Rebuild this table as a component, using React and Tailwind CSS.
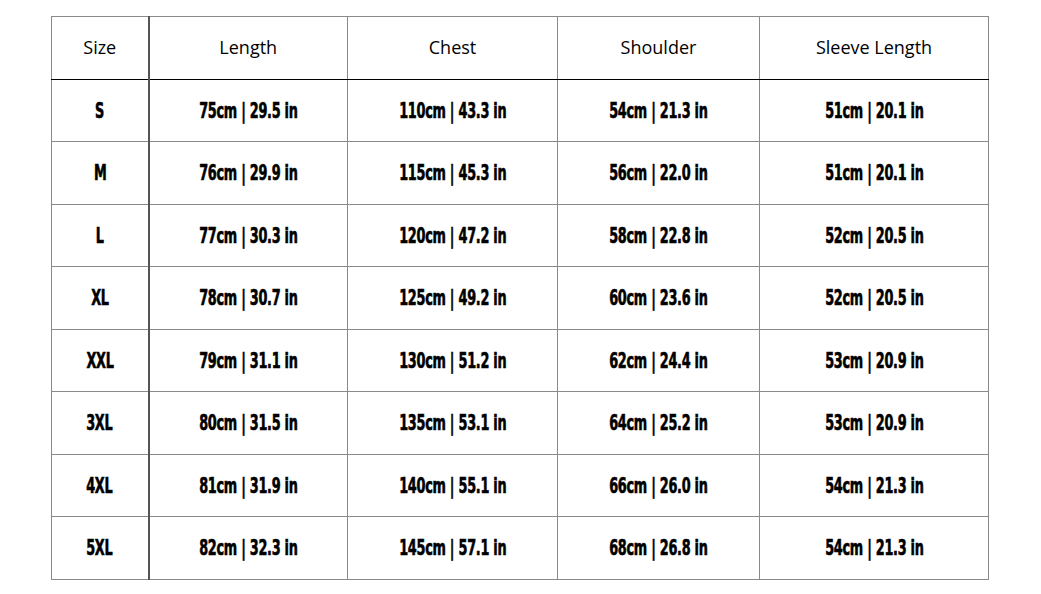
const rows = [
  ['S', '75cm | 29.5 in', '110cm | 43.3 in', '54cm | 21.3 in', '51cm | 20.1 in'],
  ['M', '76cm | 29.9 in', '115cm | 45.3 in', '56cm | 22.0 in', '51cm | 20.1 in'],
  ['L', '77cm | 30.3 in', '120cm | 47.2 in', '58cm | 22.8 in', '52cm | 20.5 in'],
  ['XL', '78cm | 30.7 in', '125cm | 49.2 in', '60cm | 23.6 in', '52cm | 20.5 in'],
  ['XXL', '79cm | 31.1 in', '130cm | 51.2 in', '62cm | 24.4 in', '53cm | 20.9 in'],
  ['3XL', '80cm | 31.5 in', '135cm | 53.1 in', '64cm | 25.2 in', '53cm | 20.9 in'],
  ['4XL', '81cm | 31.9 in', '140cm | 55.1 in', '66cm | 26.0 in', '54cm | 21.3 in'],
  ['5XL', '82cm | 32.3 in', '145cm | 57.1 in', '68cm | 26.8 in', '54cm | 21.3 in'],
]

const headers = ['Size', 'Length', 'Chest', 'Shoulder', 'Sleeve Length']
const widths = ['w-[97px]', 'w-[199px]', 'w-[210px]', 'w-[202px]', 'w-[229px]']

export default function App() {
  return (
    <div className="bg-white w-[1041px] h-[594px] pt-[16px] pl-[51px]">
      <table className="border-collapse table-fixed w-[938px] border border-[#8a8a8a]">
        <thead>
          <tr className="h-[63px]">
            {headers.map((h, i) => (
              <th
                key={h}
                className={`${widths[i]} font-normal text-[18px] text-black text-center pb-[2px] border-b border-b-black ${i === 0 ? 'border-r-2 border-r-[#555]' : 'border-r border-r-[#8a8a8a]'}`}
                style={{ fontFamily: '"Open Sans", "Noto Sans", sans-serif' }}
              >
                {h}
              </th>
            ))}
          </tr>
        </thead>
        <tbody>
          {rows.map((r, ri) => (
            <tr key={r[0]} className={ri % 2 === 0 ? 'h-[62px]' : 'h-[63px]'}>
              {r.map((c, i) => (
                <td
                  key={i}
                  className={`text-center pt-[2px] border-b border-b-[#8a8a8a] ${i === 0 ? 'border-r-2 border-r-[#555]' : 'border-r border-r-[#8a8a8a]'}`}
                >
                  <span
                    className="inline-block font-bold text-[21px] text-black font-stretch-condensed scale-x-[0.68] tracking-[-0.4px] [-webkit-text-stroke:0.6px_black]"
                    style={{ fontFamily: '"DejaVu Sans", sans-serif' }}
                  >
                    {c}
                  </span>
                </td>
              ))}
            </tr>
          ))}
        </tbody>
      </table>
    </div>
  )
}
